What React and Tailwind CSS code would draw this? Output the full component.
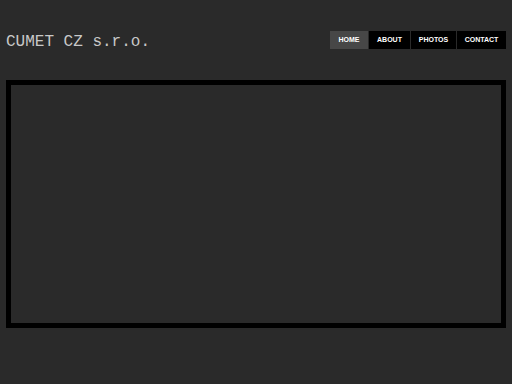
import React from 'react'

const links = [
  { label: "HOME", w: "w-[38px]" },
  { label: "ABOUT", w: "w-[41px]" },
  { label: "PHOTOS", w: "w-[45px]" },
  { label: "CONTACT", w: "w-[49px]" },
]

const App = () => {
  return (
    <div className="w-[512px] h-[384px] bg-[#2a2a2a] overflow-hidden">
      <div className="flex items-start justify-between pt-[31px] pl-[6px] pr-[6px]">
        <h1 className="text-[16px] leading-[20px] mt-[1px] text-[#c8c8c8] font-['Liberation_Mono',monospace]">
          CUMET CZ s.r.o.
        </h1>
        <ul className="flex gap-[1px]">
          {links.map((l, i) => (
            <li key={l.label}>
              <a
                href="#"
                className={
                  "flex items-center justify-center h-[18px] text-[7px] font-bold text-white font-['Liberation_Sans',sans-serif] " +
                  l.w + " " +
                  (i === 0 ? "bg-[#474747]" : "bg-black")
                }
              >
                {l.label}
              </a>
            </li>
          ))}
        </ul>
      </div>
      <div className="mx-[6px] mt-[28px] h-[248px] border-[5px] border-black bg-[#2a2a2a]"></div>
    </div>
  )
}

export default App
